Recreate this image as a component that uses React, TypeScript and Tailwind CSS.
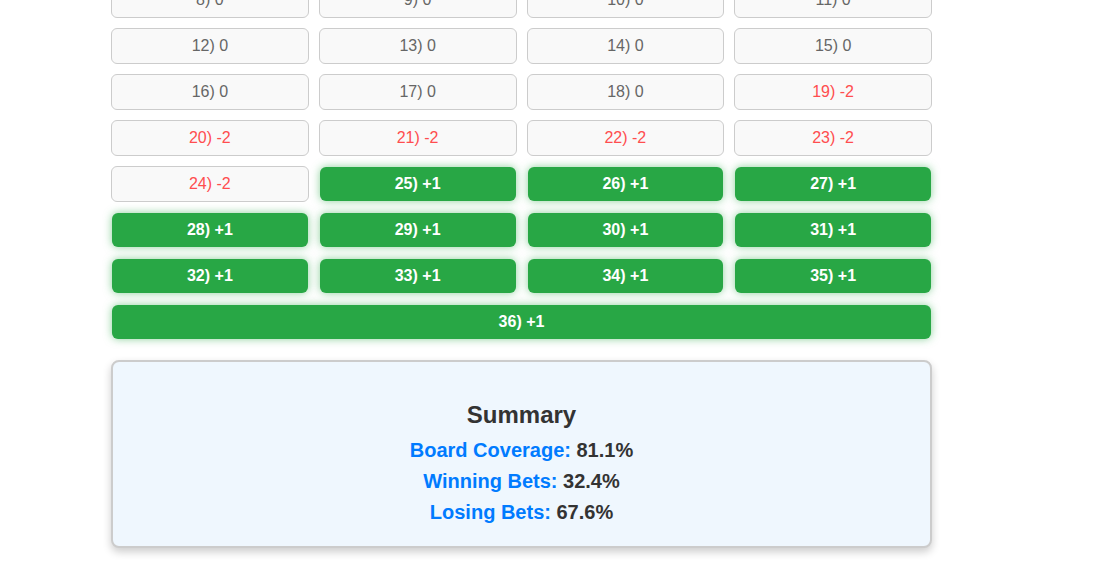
import React from 'react';

type Cell = { n: number; v: number };

const cells: Cell[] = Array.from({ length: 29 }, (_, i) => {
  const n = i + 8;
  const v = n <= 18 ? 0 : n <= 24 ? -2 : 1;
  return { n, v };
});

function BetCell({ cell }: { cell: Cell }) {
  const label = `${cell.n}) ${cell.v > 0 ? '+' + cell.v : cell.v}`;
  if (cell.v > 0) {
    return (
      <div
        className={`m-px h-[34px] flex items-center justify-center rounded-[6px] bg-[#28a745] text-white font-bold text-[16px] shadow-[0_0_9px_rgba(40,167,69,0.55)] ${
          cell.n === 36 ? 'col-span-4' : ''
        }`}
      >
        {label}
      </div>
    );
  }
  return (
    <div
      className={`h-[36px] flex items-center justify-center rounded-[6px] border border-[#cccccc] bg-[#f9f9f9] text-[16px] ${
        cell.v < 0 ? 'text-[#ff4d4f]' : 'text-[#666666]'
      }`}
    >
      {label}
    </div>
  );
}

export default function App() {
  return (
    <div className="min-h-screen bg-white font-['Liberation_Sans',Arial,sans-serif] overflow-hidden">
      <div className="ml-[111px] w-[821px] -mt-[18px]">
        <div className="grid grid-cols-4 gap-[10px]">
          {cells.map((c) => (
            <BetCell key={c.n} cell={c} />
          ))}
        </div>

        <div className="mt-[20px] h-[188px] rounded-[8px] border-2 border-[#cccccc] bg-[#eff7fe] shadow-[0_4px_8px_rgba(0,0,0,0.2)] pt-[39px] text-center">
          <h2 className="text-[24px] leading-[28px] font-bold text-[#333333]">Summary</h2>
          <div className="mt-[6px] text-[20px] leading-[31px] font-bold">
            <p>
              <span className="text-[#007bff]">Board Coverage:</span>{' '}
              <span className="text-[#333333]">81.1%</span>
            </p>
            <p>
              <span className="text-[#007bff]">Winning Bets:</span>{' '}
              <span className="text-[#333333]">32.4%</span>
            </p>
            <p>
              <span className="text-[#007bff]">Losing Bets:</span>{' '}
              <span className="text-[#333333]">67.6%</span>
            </p>
          </div>
        </div>
      </div>
    </div>
  );
}
